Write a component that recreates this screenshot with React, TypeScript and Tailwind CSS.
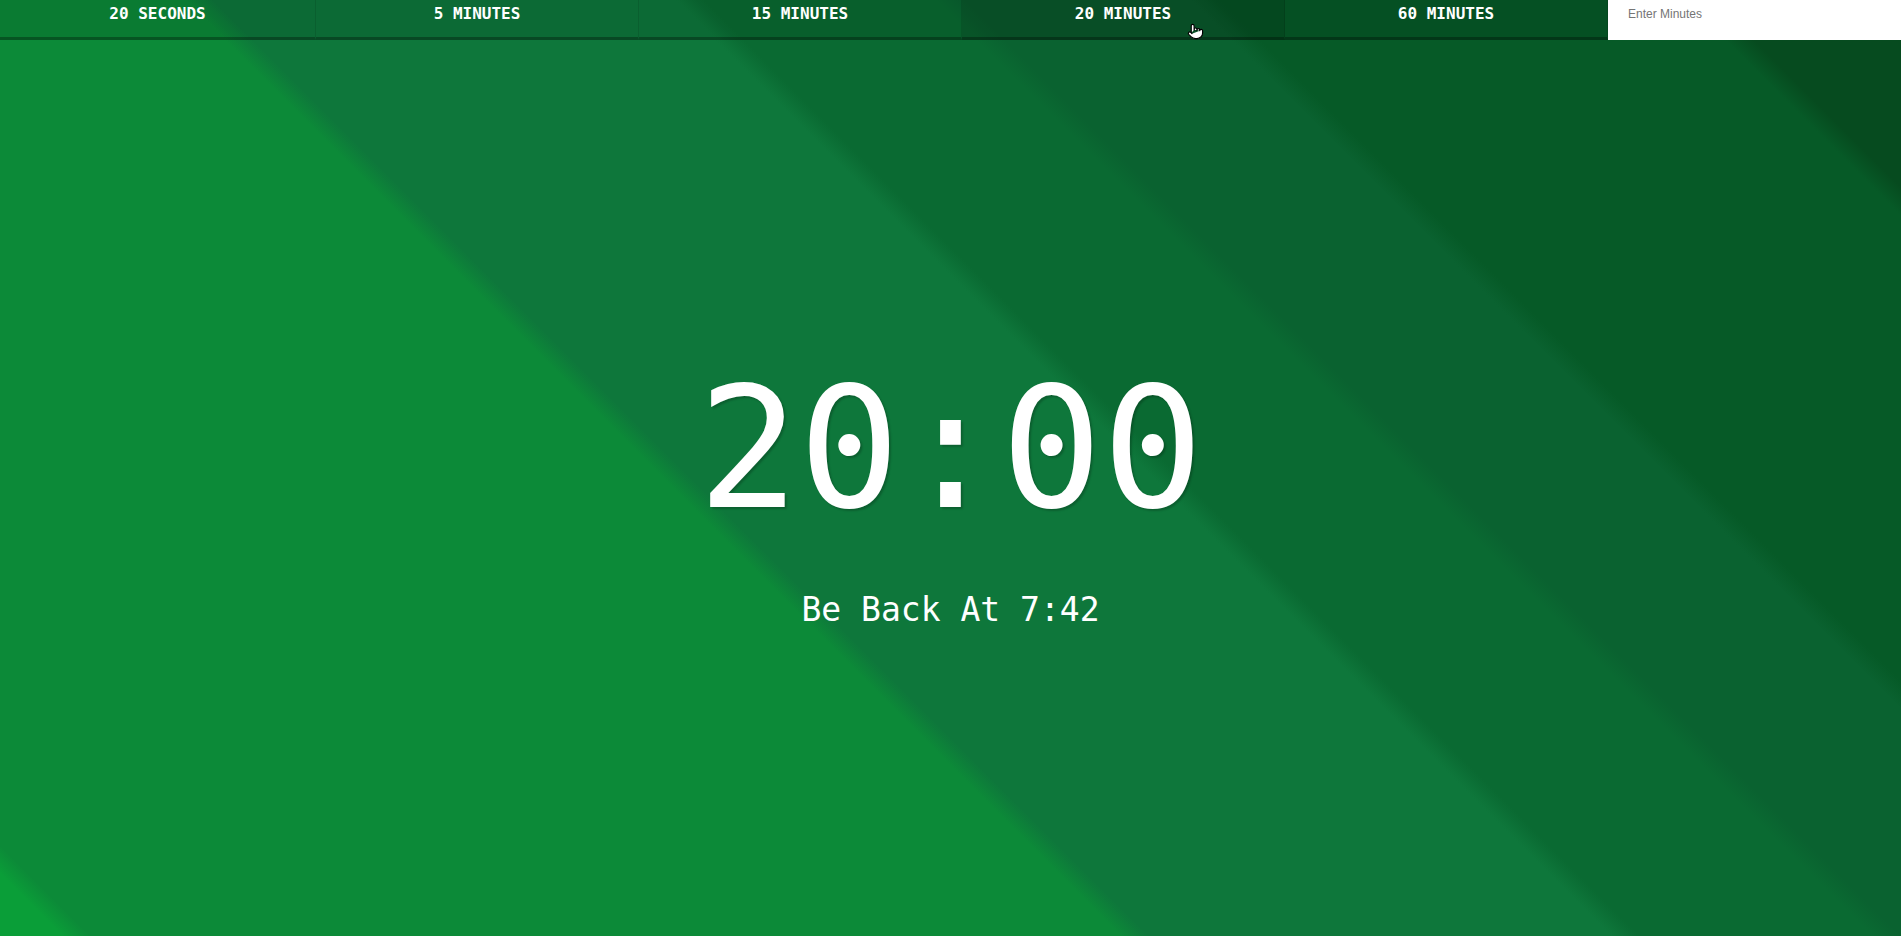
import React, { useState } from 'react';
import { Pointer } from 'lucide-react';

const presets = ['20 SECONDS', '5 MINUTES', '15 MINUTES', '20 MINUTES', '60 MINUTES'];

function PresetBar() {
  const [minutes, setMinutes] = useState('');

  return (
    <nav className="relative flex h-10 shrink-0">
      {presets.map((label, i) => (
        <button
          key={label}
          className={
            'flex items-start justify-center border-b-[3px] border-r border-b-black/30 border-r-black/10 pt-[2px] text-[16px] leading-6 font-bold text-white ' +
            (i === 0 ? 'w-[316px] ' : 'flex-1 ') +
            (i === 3 ? 'bg-black/20' : 'bg-black/10')
          }
        >
          {label}
        </button>
      ))}
      <input
        value={minutes}
        onChange={(e) => setMinutes(e.target.value)}
        placeholder="Enter Minutes"
        className="h-10 w-[293px] bg-white pb-[13px] pl-5 font-['Liberation_Sans',sans-serif] text-[12px] text-gray-800 placeholder:text-[#757575] outline-none"
      />
      <Pointer
        className="pointer-events-none absolute left-[1187px] top-[23px]"
        size={17}
        fill="white"
        stroke="black"
        strokeWidth={1.6}
      />
    </nav>
  );
}

export default function App() {
  return (
    <div className="flex h-screen flex-col overflow-hidden bg-[linear-gradient(45deg,#0a9e38_0%,#0a9e38_2.2%,#0c8a38_3.2%,#0c8a38_39.5%,#0e773b_40.5%,#0e773b_56.8%,#0a6a32_57.8%,#0a6a32_66%,#0a6230_67%,#0a6230_75%,#065a27_76%,#065a27_92.4%,#064b1f_93.4%,#064b1f_100%)] font-['DejaVu_Sans_Mono',monospace] text-white">
      <PresetBar />

      <main className="flex flex-1 flex-col items-center justify-center pt-[14px]">
        <div className="text-[168px] leading-none [text-shadow:2px_2px_2px_rgba(0,0,0,0.2)]">20:00</div>
        <div className="mt-[60px] text-[33px] leading-none">Be Back At 7:42</div>
      </main>
    </div>
  );
}
